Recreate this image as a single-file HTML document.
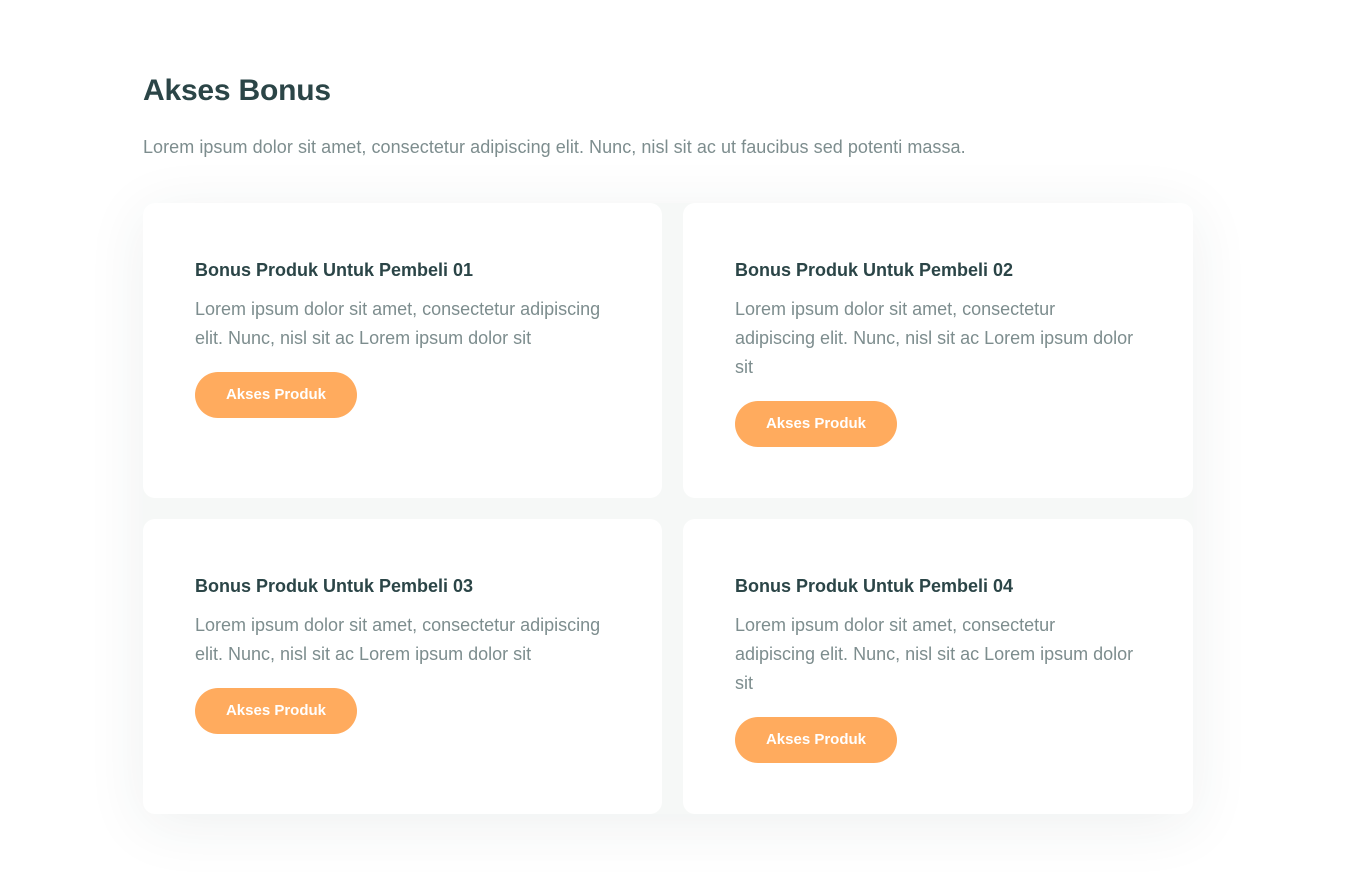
<!DOCTYPE html>
<html><head><meta charset="utf-8"><style>
*{margin:0;padding:0;box-sizing:border-box}
body{width:1346px;height:884px;background:#fff;font-family:"Liberation Sans",sans-serif;position:relative;overflow:hidden}
h1{position:absolute;left:143px;top:74px;font-size:30px;font-weight:bold;color:#2b4547;letter-spacing:-0.2px}
.sub{position:absolute;left:143px;top:137px;font-size:18px;color:#7d8d8e;letter-spacing:0.05px}
.wrap{position:absolute;left:143px;top:203px;width:1050px;height:611px;box-shadow:0 10px 60px rgba(40,60,60,0.08);border-radius:12px;background:#f6f8f7}
.card{position:absolute;background:#fff;border-radius:12px;padding:56px 52px}
.card h3{font-size:18px;font-weight:bold;color:#2b4547;margin-bottom:14px;line-height:22px}
.card p{font-size:18px;line-height:29px;color:#7d8d8e;margin-bottom:19px}
.btn{display:inline-block;width:162px;height:46px;border-radius:23px;background:#ffab5e;color:#fff;font-weight:bold;font-size:15px;line-height:46px;text-align:center}
</style></head><body>
<h1>Akses Bonus</h1>
<div class="sub">Lorem ipsum dolor sit amet, consectetur adipiscing elit. Nunc, nisl sit ac ut faucibus sed potenti massa.</div>
<div class="wrap"></div>
<div class="card" style="left:143px;top:203px;width:519px;height:295px"><h3>Bonus Produk Untuk Pembeli 01</h3><p>Lorem ipsum dolor sit amet, consectetur adipiscing elit. Nunc, nisl sit ac Lorem ipsum dolor sit</p><span class="btn">Akses Produk</span></div>
<div class="card" style="left:683px;top:203px;width:510px;height:295px"><h3>Bonus Produk Untuk Pembeli 02</h3><p style="width:405px">Lorem ipsum dolor sit amet, consectetur adipiscing elit. Nunc, nisl sit ac Lorem ipsum dolor sit</p><span class="btn">Akses Produk</span></div>
<div class="card" style="left:143px;top:519px;width:519px;height:295px"><h3>Bonus Produk Untuk Pembeli 03</h3><p>Lorem ipsum dolor sit amet, consectetur adipiscing elit. Nunc, nisl sit ac Lorem ipsum dolor sit</p><span class="btn">Akses Produk</span></div>
<div class="card" style="left:683px;top:519px;width:510px;height:295px"><h3>Bonus Produk Untuk Pembeli 04</h3><p style="width:405px">Lorem ipsum dolor sit amet, consectetur adipiscing elit. Nunc, nisl sit ac Lorem ipsum dolor sit</p><span class="btn">Akses Produk</span></div>
</body></html>
